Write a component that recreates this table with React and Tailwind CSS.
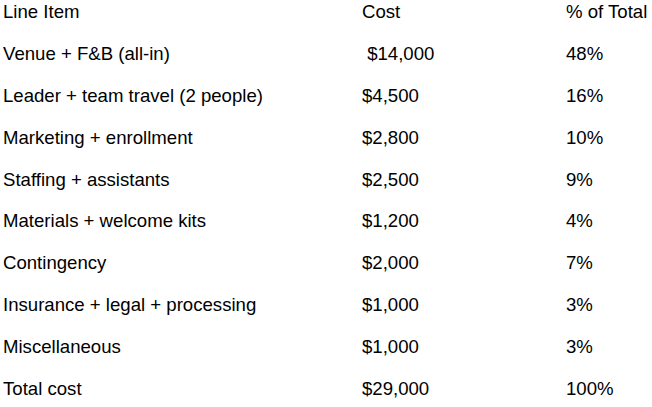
const rows = [
  ["Line Item", "Cost", "% of Total"],
  ["Venue + F&B (all-in)", " $14,000", "48%"],
  ["Leader + team travel (2 people)", "$4,500", "16%"],
  ["Marketing + enrollment", "$2,800", "10%"],
  ["Staffing + assistants", "$2,500", "9%"],
  ["Materials + welcome kits", "$1,200", "4%"],
  ["Contingency", "$2,000", "7%"],
  ["Insurance + legal + processing", "$1,000", "3%"],
  ["Miscellaneous", "$1,000", "3%"],
  ["Total cost", "$29,000", "100%"],
];

export default function App() {
  return (
    <div
      className="w-[652px] h-[407px] bg-white text-black overflow-hidden pt-[1px]"
      style={{ fontFamily: '"Liberation Sans", Arial, sans-serif' }}
    >
      {rows.map((r, i) => (
        <div
          key={i}
          className="grid grid-cols-[359px_204px_1fr] h-[41.9px] text-[18.6px] leading-[22px] whitespace-pre"
        >
          <div className="pl-[3px]">{r[0]}</div>
          <div className="pl-[3px]">{r[1]}</div>
          <div className="pl-[3px]">{r[2]}</div>
        </div>
      ))}
    </div>
  );
}
